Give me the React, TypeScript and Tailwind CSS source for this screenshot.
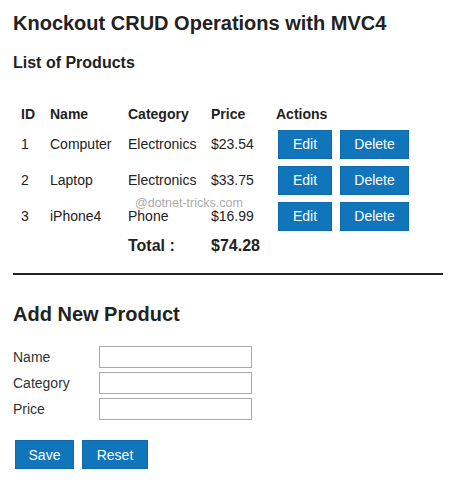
import React from 'react'

type Product = { id: number; name: string; category: string; price: string }

const products: Product[] = [
  { id: 1, name: 'Computer', category: 'Electronics', price: '$23.54' },
  { id: 2, name: 'Laptop', category: 'Electronics', price: '$33.75' },
  { id: 3, name: 'iPhone4', category: 'Phone', price: '$16.99' },
]

function BlueButton({ label, width }: { label: string; width: string }) {
  return (
    <button
      className={`${width} h-[29px] bg-[#1075bb] border border-[#0e6aab] text-white text-[14px] leading-[14px] cursor-pointer`}
    >
      {label}
    </button>
  )
}

export default function App() {
  return (
    <div className="relative px-[13px] font-['Liberation_Sans',Arial,sans-serif] text-[#222]">
      <h1 className="pt-[13px] text-[20px] leading-[20px] font-bold">Knockout CRUD Operations with MVC4</h1>
      <h2 className="mt-[22px] text-[16px] leading-[16px] font-bold">List of Products</h2>

      {/* table header */}
      <div className="mt-[36px] flex pl-[8px] text-[14px] leading-[14px] font-bold">
        <div className="w-[29px]">ID</div>
        <div className="w-[78px]">Name</div>
        <div className="w-[83px]">Category</div>
        <div className="w-[65px]">Price</div>
        <div>Actions</div>
      </div>

      <div className="mt-[5px]">
        {products.map(p => (
          <div key={p.id} className="flex items-center h-[36px] pl-[8px] text-[14px] leading-[14px]">
            <div className="w-[29px]">{p.id}</div>
            <div className="w-[78px]">{p.name}</div>
            <div className="w-[83px]">{p.category}</div>
            <div className="w-[65px]">{p.price}</div>
            <div className="flex gap-[8px] pl-[2px]">
              <BlueButton label="Edit" width="w-[54px]" />
              <BlueButton label="Delete" width="w-[69px]" />
            </div>
          </div>
        ))}
        <div className="flex items-center h-[24px] pl-[8px] text-[16px] leading-[16px] font-bold">
          <div className="w-[107px]" />
          <div className="w-[83px]">Total :</div>
          <div>$74.28</div>
        </div>
      </div>

      <span className="absolute left-[135px] top-[196px] text-[12.5px] leading-[14px] text-[#ababab]">
        @dotnet-tricks.com
      </span>

      <div className="mt-[15px] w-[430px] h-[2px] bg-[#222]" />

      <h2 className="mt-[29px] text-[20px] leading-[20px] font-bold">Add New Product</h2>

      <div className="mt-[22px] flex flex-col gap-[4px] text-[14px] leading-[14px] text-[#333]">
        {['Name', 'Category', 'Price'].map(label => (
          <div key={label} className="flex items-center">
            <label className="w-[86px]">{label}</label>
            <input className="w-[153px] h-[22px] border border-[#a9a9a9] bg-white outline-none px-1" />
          </div>
        ))}
      </div>

      <div className="mt-[20px] flex gap-[8px] pl-[2px]">
        <BlueButton label="Save" width="w-[59px]" />
        <BlueButton label="Reset" width="w-[66px]" />
      </div>
    </div>
  )
}
